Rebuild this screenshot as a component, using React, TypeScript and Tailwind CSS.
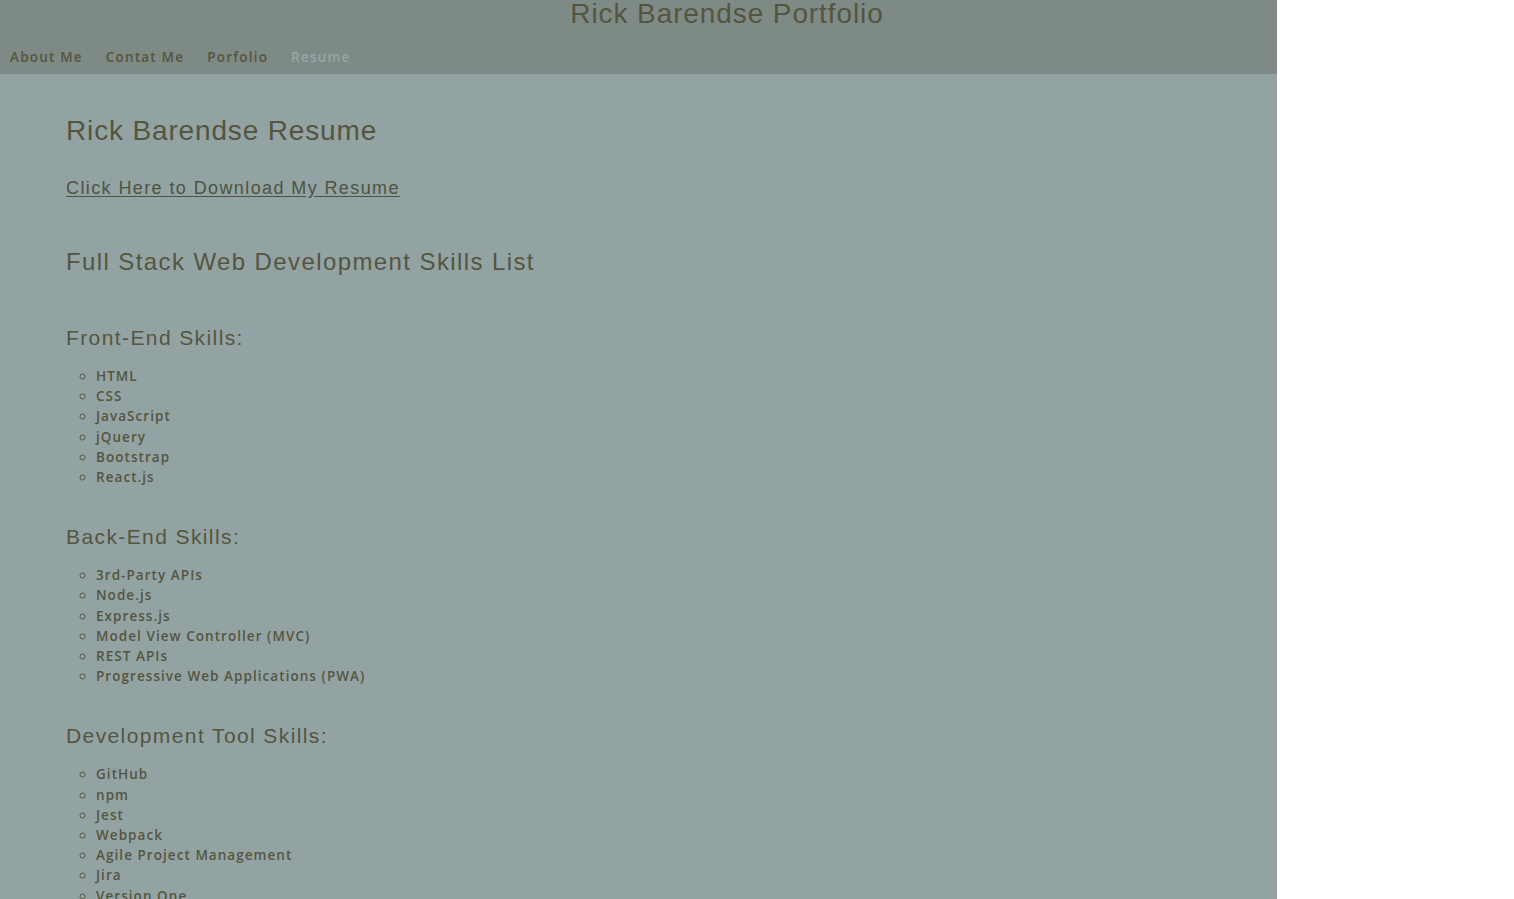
import React from 'react';

const navLinks = ['About Me', 'Contat Me', 'Porfolio', 'Resume'];

const sections = [
    {
        title: 'Front-End Skills:',
        items: ['HTML', 'CSS', 'JavaScript', 'jQuery', 'Bootstrap', 'React.js'],
    },
    {
        title: 'Back-End Skills:',
        items: [
            '3rd-Party APIs',
            'Node.js',
            'Express.js',
            'Model View Controller (MVC)',
            'REST APIs',
            'Progressive Web Applications (PWA)',
        ],
    },
    {
        title: 'Development Tool Skills:',
        items: ['GitHub', 'npm', 'Jest', 'Webpack', 'Agile Project Management', 'Jira', 'Version One'],
    },
];

const App: React.FC = () => {
    return (
        <div className="w-[1277px] min-h-screen bg-[#93a3a3] text-[#55553f] font-['Liberation_Sans',Arial,sans-serif]">
            {/* header */}
            <header className="bg-[#7e8a85] h-[74px] flex flex-col">
                <h1 className="pl-[177px] text-center text-[28px] leading-[28px] tracking-[0.9px]">Rick Barendse Portfolio</h1>
                <nav className="mt-[19px] flex gap-[23px] pl-[10px] font-['Open_Sans',sans-serif] text-[13.5px] leading-[20px] font-semibold tracking-[1.2px]">
                    {navLinks.map((link) => (
                        <a
                            key={link}
                            href="#"
                            className={link === 'Resume' ? 'text-[#97a6a6]' : 'text-[#55553f]'}
                        >
                            {link}
                        </a>
                    ))}
                </nav>
            </header>

            <main className="px-[66px] pt-[40px] pb-8">
                <h2 className="text-[28px] leading-[34px] tracking-[0.85px]">Rick Barendse Resume</h2>
                <a href="#" className="mt-[28px] block w-fit text-[18px] leading-[24px] tracking-[1.4px] underline underline-offset-2 text-[#4f5340]">
                    Click Here to Download My Resume
                </a>
                <h2 className="mt-[47px] text-[24px] leading-[30px] tracking-[1.4px]">Full Stack Web Development Skills List</h2>

                {sections.map((section, i) => (
                    <section key={section.title} className={i === 0 ? 'mt-[48px]' : 'mt-[37px]'}>
                        <h3 className="text-[21px] leading-[26px] tracking-[1.4px]">{section.title}</h3>
                        <ul className="mt-[15px] list-[circle] pl-[30px] font-['Open_Sans',sans-serif] text-[13.5px] leading-[20.2px] font-semibold tracking-[1.05px]">
                            {section.items.map((item) => (
                                <li key={item}>{item}</li>
                            ))}
                        </ul>
                    </section>
                ))}
            </main>
        </div>
    );
};

export default App;
